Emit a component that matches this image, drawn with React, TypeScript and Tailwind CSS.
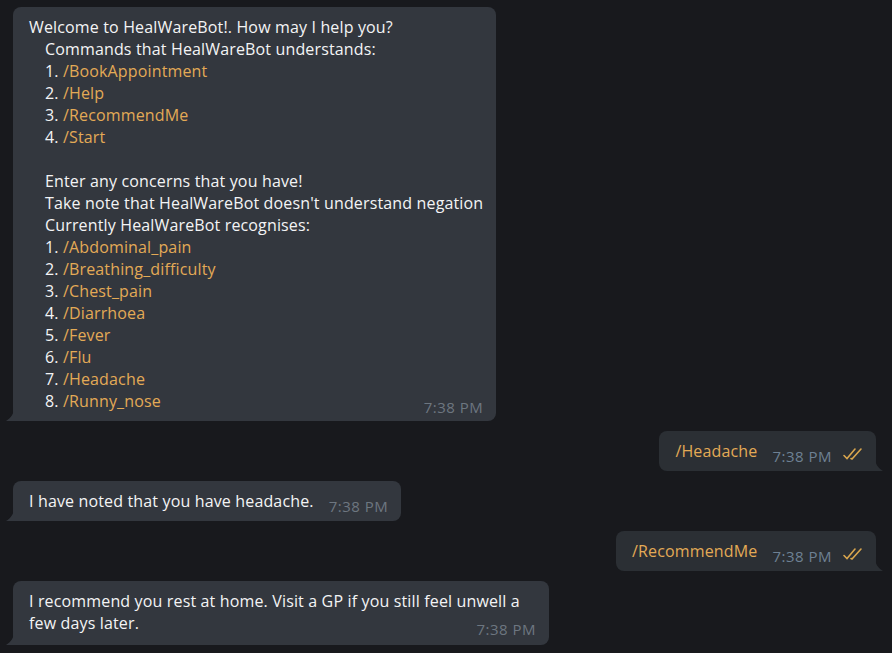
const commands = ["/BookAppointment", "/Help", "/RecommendMe", "/Start"];
const symptoms = [
  "/Abdominal_pain",
  "/Breathing_difficulty",
  "/Chest_pain",
  "/Diarrhoea",
  "/Fever",
  "/Flu",
  "/Headache",
  "/Runny_nose",
];

function TailLeft({ color }: { color: string }) {
  return (
    <svg className="absolute -left-[7px] bottom-0" width="8" height="14" viewBox="0 0 8 14">
      <path d="M8 0 C8 7 5 11 0 14 H8 Z" fill={color} />
    </svg>
  );
}

function TailRight({ color }: { color: string }) {
  return (
    <svg className="absolute -right-[7px] bottom-0" width="8" height="14" viewBox="0 0 8 14">
      <path d="M0 0 C0 7 3 11 8 14 H0 Z" fill={color} />
    </svg>
  );
}

function Checks() {
  return (
    <svg className="block" width="24" height="14" viewBox="0 0 24 14" fill="none" stroke="#d9a64e" strokeWidth="1.6" strokeLinecap="round">
      <path d="M2 8.5 L5 11.5 L13 2" />
      <path d="M9 11.5 L10 12 L19 2" />
    </svg>
  );
}

function Time({ out }: { out?: boolean }) {
  return (
    <div className={`block text-[15px] leading-[18px] tracking-[0.5px] whitespace-nowrap ${out ? "text-[#6e8193]" : "text-[#6d7680]"}`}>
      7:38 PM
    </div>
  );
}

function Incoming({ children, wide }: { children: React.ReactNode; wide?: boolean }) {
  return (
    <div className="relative self-start ml-[13px] rounded-[8px] rounded-bl-none bg-[#33373e]">
      <TailLeft color="#33373e" />
      {wide ? children : <div className="flex items-end pl-4 pr-[13px] py-[9px] gap-[15px]">{children}</div>}
    </div>
  );
}

function Outgoing({ text }: { text: string }) {
  return (
    <div className="relative self-end mr-4 rounded-[8px] rounded-br-none bg-[#2b2f34]">
      <TailRight color="#2b2f34" />
      <div className="flex items-end pl-4 pr-[10px] py-[9px]">
        <span className="text-[#e3aa56]">{text}</span>
        <div className="ml-[15px] -mb-[3px]">
          <Time out />
        </div>
        <div className="ml-[10px] mb-[1px]">
          <Checks />
        </div>
      </div>
    </div>
  );
}

export default function App() {
  return (
    <div
      className="w-[892px] h-[653px] overflow-hidden bg-[#18191d] text-[#f3f4f5] text-[16px] leading-[22px] tracking-[0.15px] flex flex-col gap-[10px] pt-[7px]"
      style={{ fontFamily: '"Open Sans", sans-serif' }}
    >
      <Incoming wide>
        <div className="flex flex-col pl-4 pr-[13px] py-[9px]">
          <div>
            <div>Welcome to HealWareBot!. How may I help you?</div>
            <div className="pl-4">
              <div>Commands that HealWareBot understands:</div>
              {commands.map((c, i) => (
                <div key={c}>
                  {i + 1}. <span className="text-[#e3aa56]">{c}</span>
                </div>
              ))}
              <div className="h-[22px]" />
              <div>Enter any concerns that you have!</div>
              <div>Take note that HealWareBot doesn't understand negation</div>
              <div>Currently HealWareBot recognises:</div>
              {symptoms.map((s, i) => (
                <div key={s}>
                  {i + 1}. <span className="text-[#e3aa56]">{s}</span>
                </div>
              ))}
            </div>
          </div>
          <div className="self-end -mt-[14px] -mb-[4px]">
            <Time />
          </div>
        </div>
      </Incoming>

      <Outgoing text="/Headache" />

      <Incoming>
        <span>I have noted that you have headache.</span>
        <div className="-mb-[3px]">
          <Time />
        </div>
      </Incoming>

      <Outgoing text="/RecommendMe" />

      <Incoming wide>
        <div className="flex flex-col pl-4 pr-[13px] py-[9px]">
          <div className="max-w-[507px]">
            I recommend you rest at home. Visit a GP if you still feel unwell a few days later.
          </div>
          <div className="self-end -mt-[14px] -mb-[2px]">
            <Time />
          </div>
        </div>
      </Incoming>
    </div>
  );
}
